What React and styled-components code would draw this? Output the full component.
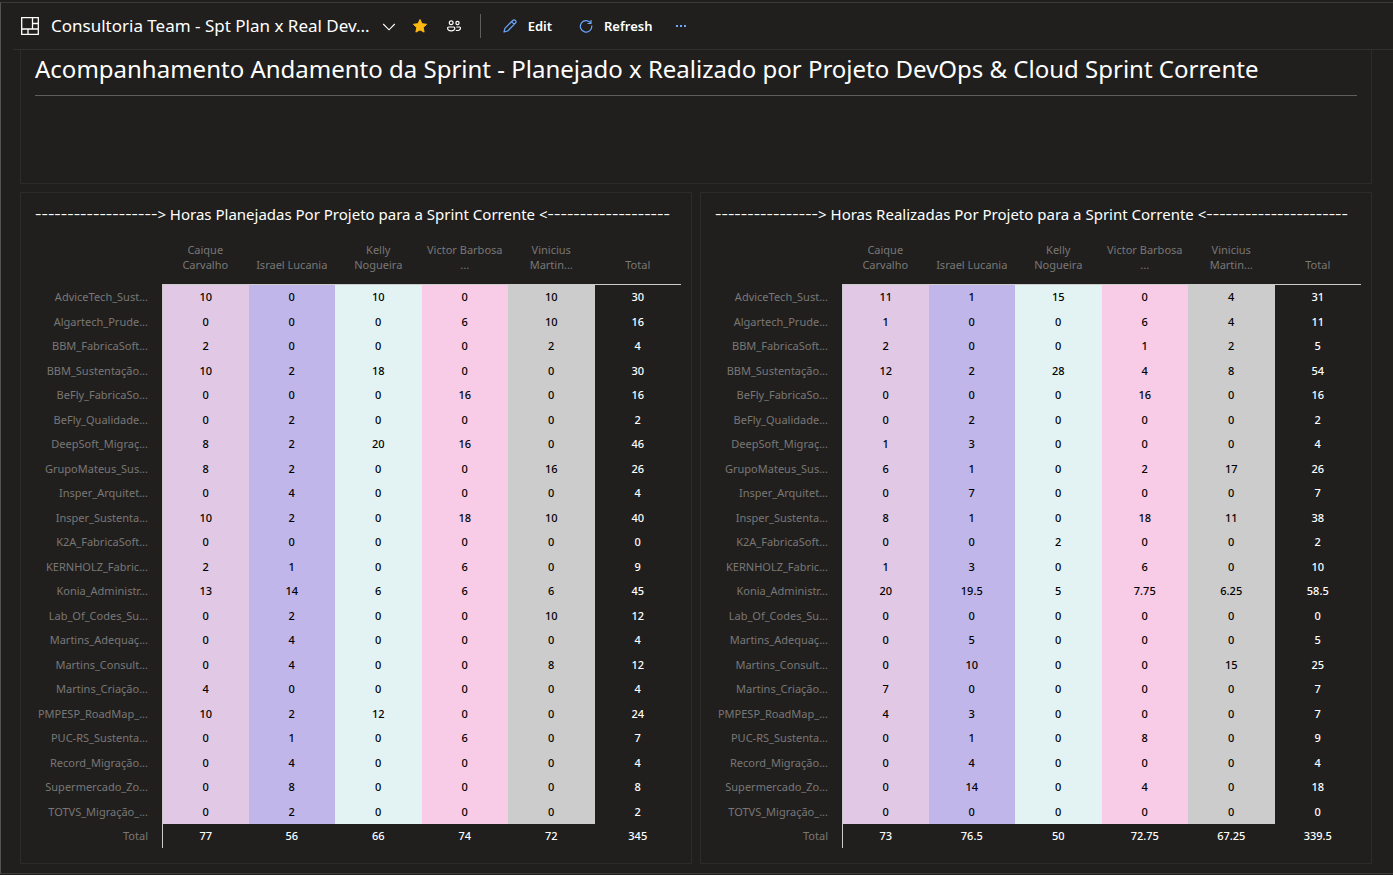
import React from 'react';
import styled, { createGlobalStyle } from 'styled-components';

const GlobalStyle = createGlobalStyle`
  * { box-sizing: border-box; }
  body {
    margin: 0;
    background: #201f1e;
    color: #fff;
    font-family: "Noto Sans", "Open Sans", sans-serif;
  }
`;

const Frame = styled.div`
  margin-top: 2px;
  border: solid #3b3a39;
  border-width: 1px 0 1px 1px;
  border-left-color: #555452;
`;

const Toolbar = styled.header`
  display: flex;
  align-items: center;
  height: 47px;
  margin-left: 12px;
  padding-left: 8px;
  border-bottom: 1px solid #31302f;
  svg { display: block; flex: none; }
`;

const PageName = styled.h1`
  margin: 0 0 0 12px;
  font-size: 17px;
  line-height: 24px;
  font-weight: 400;
  white-space: nowrap;
`;

const IconButton = styled.button`
  display: flex;
  align-items: center;
  justify-content: center;
  margin-left: ${(p) => p.$gap}px;
  padding: 0;
  border: 0;
  background: none;
  color: ${(p) => p.$color || '#fff'};
`;

const Divider = styled.span`
  width: 1px;
  height: 24px;
  margin-left: 18px;
  background: #605e5c;
`;

const CommandButton = styled.button`
  display: flex;
  align-items: center;
  gap: 11px;
  margin-left: ${(p) => p.$gap}px;
  padding: 0;
  border: 0;
  background: none;
  color: #fff;
  font: 600 13px/20px "Noto Sans", sans-serif;
  svg { color: #6ca6fd; }
`;

const Board = styled.main`
  display: grid;
  grid-template-columns: 1fr 1fr;
  gap: 8px;
  padding: 0 21px 9px 19px;
`;

const Panel = styled.section`
  min-width: 0;
  border: 1px solid #2c2b2a;
`;

const IntroPanel = styled(Panel)`
  grid-column: 1 / -1;
  height: 134px;
  padding: 0 14px;
  border-top: 0;
`;

const IntroTitle = styled.h2`
  margin: 0;
  height: 46px;
  border-bottom: 1px solid #605e5c;
  font-size: 24px;
  line-height: 37px;
  font-weight: 400;
  white-space: nowrap;
`;

const MatrixPanel = styled(Panel)`
  padding: 9px 10px 15px 0;
`;

const PanelTitle = styled.h3`
  margin: 0 0 0 14px;
  font-size: 15px;
  line-height: 24px;
  font-weight: 400;
  white-space: nowrap;
`;

const Dashes = styled.span`
  font-size: 20px;
  line-height: 16px;
  font-weight: 300;
`;

const Matrix = styled.table`
  width: 100%;
  margin-top: 13px;
  table-layout: fixed;
  border-collapse: separate;
  border-spacing: 0;
`;

const LabelCol = styled.col`
  width: 141px;
`;

const HeadCell = styled.th`
  height: 46px;
  padding: 0 0 12px;
  border-bottom: 1px solid #cccccc;
  color: #797775;
  font-size: 11px;
  line-height: 15px;
  font-weight: 400;
  vertical-align: bottom;
`;

const CornerCell = styled.td`
  padding: 0;
`;

const Row = styled.tr`
  height: 24px;
  &:nth-child(even) { height: 25px; }
`;

const RowLabel = styled.th`
  padding: 0 14px 0 0;
  color: #797775;
  font-size: 11px;
  line-height: 20px;
  font-weight: 400;
  text-align: right;
  white-space: nowrap;
`;

const Cell = styled.td`
  padding: 0;
  border-left: ${(p) => (p.$first ? '1px solid #cccccc' : '0')};
  background: ${(p) => p.$fill || 'transparent'};
  color: ${(p) => (p.$fill ? '#000' : '#fff')};
  font-size: 11px;
  line-height: 20px;
  font-weight: 500;
  text-align: center;
`;

const FILLS = ['#e1c9e6', '#c0b6e9', '#e3f3f3', '#f8cbe6', '#cccccc'];

const PEOPLE = [
  ['Caique', 'Carvalho'],
  ['Israel Lucania'],
  ['Kelly', 'Nogueira'],
  ['Victor Barbosa', '...'],
  ['Vinicius', 'Martin...'],
  ['Total'],
];

const PROJECTS = [
  'AdviceTech_Sust...', 'Algartech_Prude...', 'BBM_FabricaSoft...', 'BBM_Sustentação...',
  'BeFly_FabricaSo...', 'BeFly_Qualidade...', 'DeepSoft_Migraç...', 'GrupoMateus_Sus...',
  'Insper_Arquitet...', 'Insper_Sustenta...', 'K2A_FabricaSoft...', 'KERNHOLZ_Fabric...',
  'Konia_Administr...', 'Lab_Of_Codes_Su...', 'Martins_Adequaç...', 'Martins_Consult...',
  'Martins_Criação...', 'PMPESP_RoadMap_...', 'PUC-RS_Sustenta...', 'Record_Migração...',
  'Supermercado_Zo...', 'TOTVS_Migração_...',
];

const PLANNED = {
  title: 'Horas Planejadas Por Projeto para a Sprint Corrente',
  before: 19,
  after: 19,
  rows: [
    [10, 0, 10, 0, 10, 30], [0, 0, 0, 6, 10, 16], [2, 0, 0, 0, 2, 4], [10, 2, 18, 0, 0, 30],
    [0, 0, 0, 16, 0, 16], [0, 2, 0, 0, 0, 2], [8, 2, 20, 16, 0, 46], [8, 2, 0, 0, 16, 26],
    [0, 4, 0, 0, 0, 4], [10, 2, 0, 18, 10, 40], [0, 0, 0, 0, 0, 0], [2, 1, 0, 6, 0, 9],
    [13, 14, 6, 6, 6, 45], [0, 2, 0, 0, 10, 12], [0, 4, 0, 0, 0, 4], [0, 4, 0, 0, 8, 12],
    [4, 0, 0, 0, 0, 4], [10, 2, 12, 0, 0, 24], [0, 1, 0, 6, 0, 7], [0, 4, 0, 0, 0, 4],
    [0, 8, 0, 0, 0, 8], [0, 2, 0, 0, 0, 2],
  ],
  totals: [77, 56, 66, 74, 72, 345],
};

const DONE = {
  title: 'Horas Realizadas Por Projeto para a Sprint Corrente',
  before: 16,
  after: 22,
  rows: [
    [11, 1, 15, 0, 4, 31], [1, 0, 0, 6, 4, 11], [2, 0, 0, 1, 2, 5], [12, 2, 28, 4, 8, 54],
    [0, 0, 0, 16, 0, 16], [0, 2, 0, 0, 0, 2], [1, 3, 0, 0, 0, 4], [6, 1, 0, 2, 17, 26],
    [0, 7, 0, 0, 0, 7], [8, 1, 0, 18, 11, 38], [0, 0, 2, 0, 0, 2], [1, 3, 0, 6, 0, 10],
    [20, 19.5, 5, 7.75, 6.25, 58.5], [0, 0, 0, 0, 0, 0], [0, 5, 0, 0, 0, 5], [0, 10, 0, 0, 15, 25],
    [7, 0, 0, 0, 0, 7], [4, 3, 0, 0, 0, 7], [0, 1, 0, 8, 0, 9], [0, 4, 0, 0, 0, 4],
    [0, 14, 0, 4, 0, 18], [0, 0, 0, 0, 0, 0],
  ],
  totals: [73, 76.5, 50, 72.75, 67.25, 339.5],
};

function HoursPanel({ data }) {
  return (
    <MatrixPanel>
      <PanelTitle>
        <Dashes>{'-'.repeat(data.before)}</Dashes>
        {'> '}
        {data.title}
        {' <'}
        <Dashes>{'-'.repeat(data.after)}</Dashes>
      </PanelTitle>
      <Matrix>
        <colgroup>
          <LabelCol />
          {PEOPLE.map((p) => <col key={p[0]} />)}
        </colgroup>
        <thead>
          <tr>
            <CornerCell />
            {PEOPLE.map((p) => (
              <HeadCell key={p[0]} scope="col">
                {p[0]}
                {p[1] && <><br />{p[1]}</>}
              </HeadCell>
            ))}
          </tr>
        </thead>
        <tbody>
          {PROJECTS.map((name, r) => (
            <Row key={name}>
              <RowLabel scope="row">{name}</RowLabel>
              {data.rows[r].map((v, c) => (
                <Cell key={c} $first={c === 0} $fill={FILLS[c]}>{v}</Cell>
              ))}
            </Row>
          ))}
        </tbody>
        <tfoot>
          <Row>
            <RowLabel scope="row">Total</RowLabel>
            {data.totals.map((v, c) => <Cell key={c} $first={c === 0}>{v}</Cell>)}
          </Row>
        </tfoot>
      </Matrix>
    </MatrixPanel>
  );
}

export default function App() {
  return (
    <>
      <GlobalStyle />
      <Frame>
        <Toolbar>
          <svg width="18" height="18" viewBox="0 0 18 18" fill="none" stroke="#fff" strokeWidth="1.300">
            <path d="M.7.7h16.600v16.600H.7zM11.500.7v11.300M.7 12h16.600M11.500 6.500h5.800M7 12v5.300" />
          </svg>
          <PageName>Consultoria Team - Spt Plan x Real Dev...</PageName>
          <IconButton $gap={12} aria-label="Choose dashboard">
            <svg width="14" height="14" viewBox="0 0 14 14" fill="none" stroke="currentColor" strokeWidth="1.100">
              <path d="M1.200 5l5.800 5.800L12.800 5" />
            </svg>
          </IconButton>
          <IconButton $gap={16} $color="#ffb910" aria-label="Favorite">
            <svg width="16" height="16" viewBox="0 0 16 16" fill="currentColor" stroke="currentColor" strokeLinejoin="round">
              <path d="M8 1.500l2 4.200 4.600.6-3.400 3.200.9 4.600L8 11.900l-4.100 2.200.9-4.600L1.400 6.300l4.600-.6z" />
            </svg>
          </IconButton>
          <IconButton $gap={18} aria-label="Team">
            <svg width="16" height="16" viewBox="0 0 16 16" fill="none" stroke="currentColor" strokeWidth="1.200">
              <circle cx="5.200" cy="4.800" r="1.900" />
              <circle cx="11.500" cy="5" r="1.600" />
              <path d="M2.600 9h5.200c.6 0 1 .4 1 1 0 3.700-7.200 3.700-7.200 0 0-.6.4-1 1-1zM10.300 9h3.200c.6 0 1 .4 1 1 0 2.400-2.500 2.900-4.700 2.200" />
            </svg>
          </IconButton>
          <Divider />
          <CommandButton $gap={22}>
            <svg width="14" height="14" viewBox="0 0 14 14" fill="none" stroke="currentColor" strokeWidth="1.200" strokeLinejoin="round">
              <path d="M1 13l.9-3.700L9.700 1.500a1.850 1.850 0 012.700 2.700L4.700 12zM8.600 2.600l2.700 2.700" />
            </svg>
            Edit
          </CommandButton>
          <CommandButton $gap={27}>
            <svg width="14" height="14" viewBox="0 0 14 14" fill="none" stroke="currentColor" strokeWidth="1.200">
              <path d="M12 1v3.500H8.500M12 4.500A5.700 5.700 0 1012.700 6.500" />
            </svg>
            Refresh
          </CommandButton>
          <IconButton $gap={23} $color="#6ca6fd" aria-label="More actions">
            <svg width="12" height="4" viewBox="0 0 12 4" fill="currentColor">
              <path d="M1 1h2v2H1zM5 1h2v2H5zM9 1h2v2H9z" />
            </svg>
          </IconButton>
        </Toolbar>
        <Board>
          <IntroPanel>
            <IntroTitle>
              Acompanhamento Andamento da Sprint - Planejado x Realizado por Projeto DevOps &amp; Cloud Sprint Corrente
            </IntroTitle>
          </IntroPanel>
          <HoursPanel data={PLANNED} />
          <HoursPanel data={DONE} />
        </Board>
      </Frame>
    </>
  );
}
